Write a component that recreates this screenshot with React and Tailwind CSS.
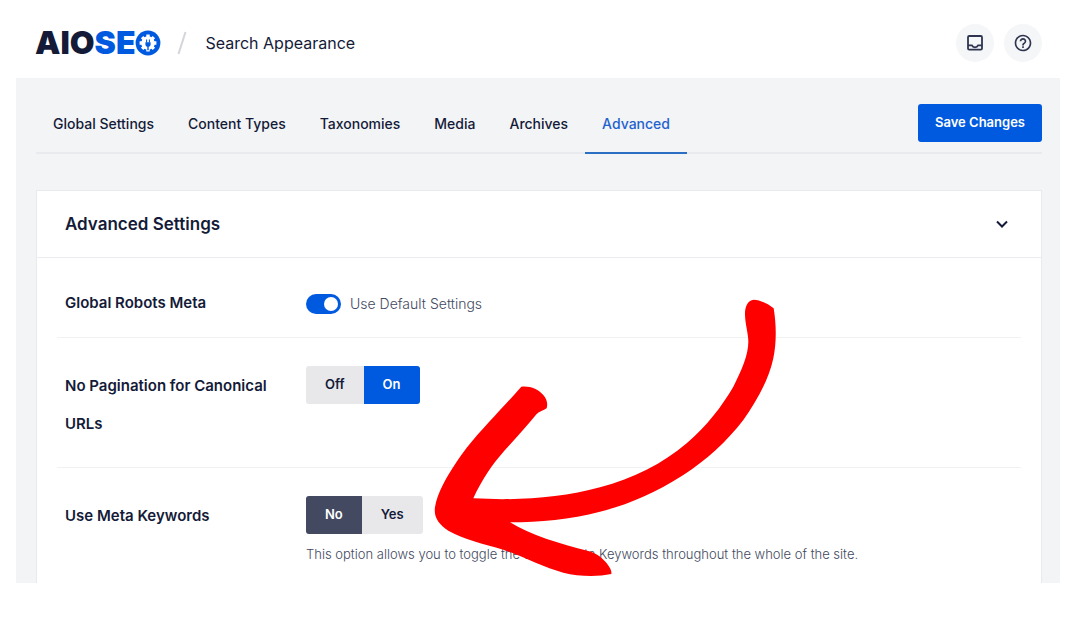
import { useState } from "react";
import { MdHelpOutline } from "react-icons/md";

const TABS = [
    "Global Settings",
    "Content Types",
    "Taxonomies",
    "Media",
    "Archives",
    "Advanced",
];

function Logo() {
    return (
        <a href="#home" aria-label="AIOSEO" className="flex items-center text-[32px] leading-none font-black">
            <span className="text-[#141b38]">AIO</span>
            <span className="text-[#005ae0]">SE</span>
            <svg viewBox="0 0 26 26" className="size-[26px]" aria-hidden="true">
                <circle cx="13" cy="13" r="12.4" fill="#005ae0" />
                <circle cx="13" cy="13" r="6.8" fill="#fff" />
                <g stroke="#fff" strokeWidth="3.4">
                    <path d="M13 4.600v16.800M4.600 13h16.800M7.100 7.100l11.800 11.800M18.900 7.100 7.100 18.900" />
                </g>
                <path
                    d="M10.4 12.200h5.200v2c0 1.300-.8 2.300-1.900 2.600v3.400h-1.400v-3.400c-1.100-.3-1.900-1.300-1.900-2.600z"
                    fill="#005ae0"
                />
                <path d="M11.600 9.600v3M14.400 9.600v3" stroke="#005ae0" strokeWidth="1.1" />
            </svg>
        </a>
    );
}

function InboxIcon() {
    return (
        <svg viewBox="0 0 18 18" className="size-[18px]" fill="none" stroke="#2f3550" strokeWidth="1.8" aria-hidden="true">
            <rect x="2" y="2" width="14" height="13.6" rx="1.2" />
            <path d="M2 11.400h3.900c.5 1.200 1.700 1.900 3.100 1.900s2.600-.7 3.100-1.900H16" />
        </svg>
    );
}

function Row({ title, children }) {
    return (
        <div className="flex px-2 border-b border-[#f0f1f3] last:border-b-0">
            <div className="w-[241px] shrink-0 pr-8 text-[15px] leading-[38px] font-semibold text-[#141b38]">
                {title}
            </div>
            <div className="flex-1 min-w-0">{children}</div>
        </div>
    );
}

function Choice({ name, options, value, onChange, activeClass }) {
    return (
        <div role="radiogroup" aria-label={name} className="flex w-fit h-[38px] rounded-[3px] overflow-hidden bg-[#e8e8eb]">
            {options.map((o) => (
                <label
                    key={o}
                    className={
                        "relative flex items-center px-[19px] text-[13px] font-semibold cursor-pointer " +
                        (o === value ? activeClass : "text-[#141b38]")
                    }
                >
                    <input
                        type="radio"
                        name={name}
                        checked={o === value}
                        onChange={() => onChange(o)}
                        className="sr-only"
                    />
                    {o}
                </label>
            ))}
        </div>
    );
}

function Arrow() {
    return (
        <svg
            viewBox="0 0 1110 900"
            className="absolute left-[404px] top-[212px] w-[370px] h-[300px] pointer-events-none"
            aria-hidden="true"
        >
            <path
                fill="#ff0000"
                d="M975 75C974 50 984 30 1001 29C1023 30 1046 43 1061 55C1070 110 1069 160 1060 205C1048 265 1012 330 970 390C920 455 860 510 790 555C700 612 620 645 540 665C450 688 360 697 270 697C330 735 420 762 505 783C530 790 552 806 566 828C573 838 575 845 574 852C530 861 475 859 430 848C370 832 310 800 250 779C190 761 130 748 85 722C55 702 41 680 45 652C51 610 80 560 110 515C150 455 195 410 240 360C265 333 285 312 304 290C330 287 355 297 370 315C380 327 384 340 380 355C370 362 358 364 350 372C318 410 290 442 255 480C215 525 185 570 160 625C290 632 420 625 540 592C640 566 730 520 800 460C860 408 905 350 940 290C965 240 985 195 985 155C985 130 976 105 975 75Z"
            />
        </svg>
    );
}

export default function App() {
    const [tab, setTab] = useState("Advanced");
    const [useDefault, setUseDefault] = useState(true);
    const [pagination, setPagination] = useState("On");
    const [keywords, setKeywords] = useState("No");

    return (
        <div className="min-h-screen bg-white font-['Inter',sans-serif] text-[#141b38]">
            <header className="h-[78px] pl-[35px] pr-[38px] pt-2 flex items-center justify-between">
                <div className="flex items-center">
                    <Logo />
                    <svg viewBox="0 0 10 24" className="w-[10px] h-6 ml-4 mr-[18px]" stroke="#d3d5da" strokeWidth="2" aria-hidden="true">
                        <path d="M8.500 1 1.500 23" />
                    </svg>
                    <h1 className="text-base">Search Appearance</h1>
                </div>
                <div className="flex gap-[10px]">
                    <button aria-label="Notifications" className="size-[38px] rounded-full bg-[#f5f6f7] grid place-items-center">
                        <InboxIcon />
                    </button>
                    <button aria-label="Help" className="size-[38px] rounded-full bg-[#f5f6f7] grid place-items-center">
                        <MdHelpOutline size={20} color="#2f3550" />
                    </button>
                </div>
            </header>

            <main className="relative ml-4 mr-5 pl-5 pr-[18px] pt-4 bg-[#f3f4f6] overflow-hidden">
                <div className="flex justify-between border-b-2 border-[#e9eaed]">
                    <nav className="flex -mb-[2px]">
                        {TABS.map((t) => (
                            <button
                                key={t}
                                onClick={() => setTab(t)}
                                className={
                                    t === tab
                                        ? "h-[60px] px-[17px] pt-[2px] border-b-2 border-[#2a6fc4] text-sm font-medium text-[#1f62cf]"
                                        : "h-[60px] px-[17px] pt-[2px] border-b-2 border-transparent text-sm font-medium"
                                }
                            >
                                {t}
                            </button>
                        ))}
                    </nav>
                    <button className="h-[38px] mt-[10px] px-[17px] rounded-[3px] bg-[#005ae0] text-white text-[13px] font-semibold">
                        Save Changes
                    </button>
                </div>

                <section className="mt-9 bg-white border border-b-0 border-[#e9eaed]">
                    <div className="h-[67px] pl-7 pr-8 flex items-center justify-between border-b border-[#ebecef]">
                        <h2 className="pt-px text-[17px] font-semibold">Advanced Settings</h2>
                        <button aria-label="Toggle section">
                            <svg viewBox="0 0 14 14" className="size-[14px]" fill="none" stroke="#141b38" strokeWidth="2" aria-hidden="true">
                                <path d="m2 4.500 5 5 5-5" />
                            </svg>
                        </button>
                    </div>
                    <div className="px-5">
                        <Row title={<div className="pt-[26px]">Global Robots Meta</div>}>
                            <label className="flex w-fit items-center h-[38px] mt-[27px] mb-[14px] gap-[9px] text-sm font-light text-[#434960] cursor-pointer">
                                <input
                                    type="checkbox"
                                    checked={useDefault}
                                    onChange={(e) => setUseDefault(e.target.checked)}
                                    className="appearance-none flex items-center w-[35px] h-5 px-[3px] rounded-full bg-[#8c8f9a] checked:bg-[#005ae0] checked:justify-end before:size-[14px] before:rounded-full before:bg-white"
                                />
                                Use Default Settings
                            </label>
                        </Row>
                        <Row title={<div className="pt-[29px] pb-6">No Pagination for Canonical URLs</div>}>
                            <div className="pt-[28px]">
                                <Choice
                                    name="No Pagination for Canonical URLs"
                                    options={["Off", "On"]}
                                    value={pagination}
                                    onChange={setPagination}
                                    activeClass="bg-[#005ae0] text-white"
                                />
                            </div>
                        </Row>
                        <Row title={<div className="pt-[29px]">Use Meta Keywords</div>}>
                            <div className="pt-[28px] pb-[19px]">
                                <Choice
                                    name="Use Meta Keywords"
                                    options={["No", "Yes"]}
                                    value={keywords}
                                    onChange={setKeywords}
                                    activeClass="bg-[#434960] text-white"
                                />
                                <p className="mt-[10px] text-[13px] leading-5 font-light text-[#434960]">
                                    This option allows you to toggle the use of Meta Keywords throughout the whole of the site.
                                </p>
                            </div>
                        </Row>
                    </div>
                </section>
                <Arrow />
            </main>
        </div>
    );
}
